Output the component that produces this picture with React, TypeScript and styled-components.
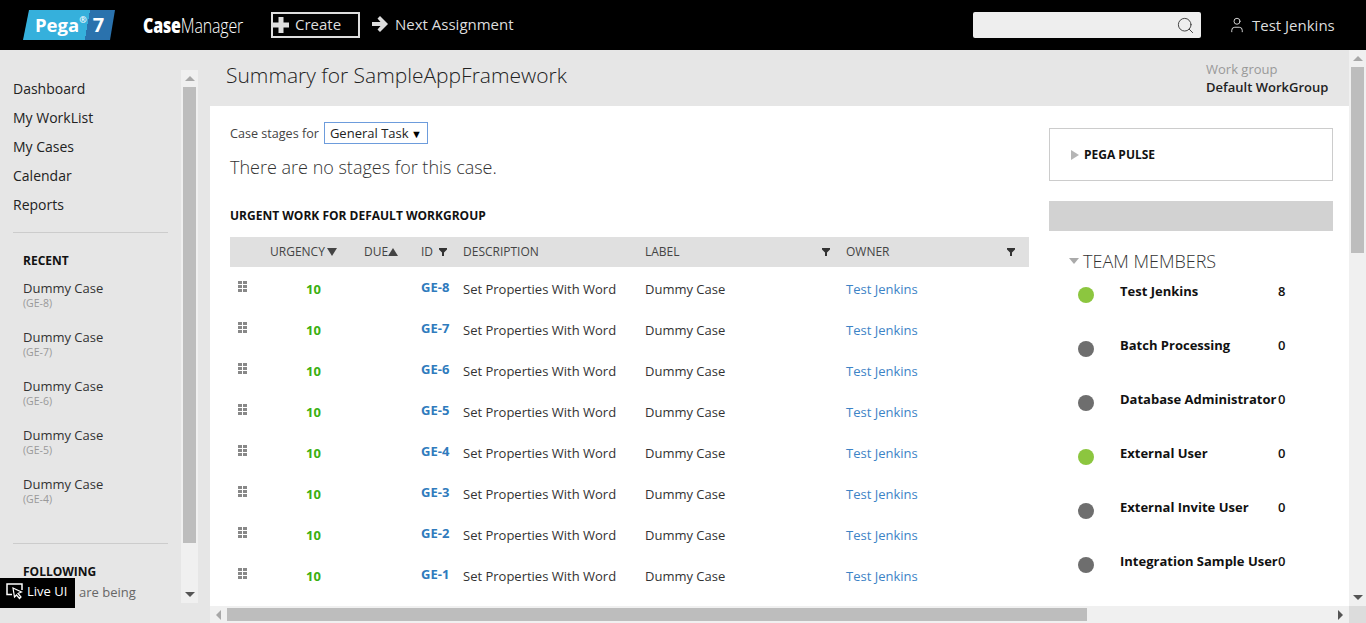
import styled, { createGlobalStyle } from 'styled-components';
import { Search, User } from 'lucide-react';

const GlobalStyle = createGlobalStyle`
  html, body {
    margin: 0;
    padding: 0;
    height: 100%;
    overflow: hidden;
    font-family: "Open Sans", "Noto Sans", sans-serif;
    color: #222;
  }
  * { box-sizing: border-box; }
`;

/* ── Header ── */

const Page = styled.div`
  position: relative;
  width: 1366px;
  height: 623px;
  overflow: hidden;
  display: flex;
  flex-direction: column;
  background: #e6e6e6;
`;

const Header = styled.header`
  flex: 0 0 50px;
  height: 50px;
  background: #000;
  display: flex;
  align-items: center;
  padding-left: 23px;
  color: #ddd;
`;

const Logo = styled.div`
  width: 92px;
  height: 30px;
  display: flex;
  align-items: center;
  color: #fff;
  font-weight: 700;
  background: linear-gradient(100deg, #35b0dc 0 66px, #2a72ad 66px 100%);
  clip-path: polygon(6px 0, 100% 0, 87px 100%, 0 100%);
`;

const LogoName = styled.span`
  margin-left: 12px;
  font-size: 18.5px;
  line-height: 28px;
`;

const LogoMark = styled.sup`
  font-size: 9px;
  line-height: 1;
  align-self: flex-start;
  margin-top: 5px;
`;

const LogoVersion = styled.span`
  margin-left: 6px;
  font-size: 20px;
  line-height: 30px;
`;

const Product = styled.div`
  margin-left: 28px;
  width: 100px;
  font-size: 21px;
  line-height: 30px;
  color: #fff;
  white-space: nowrap;
  letter-spacing: -0.2px;
  transform: scaleX(0.76);
  transform-origin: left center;

  b { font-weight: 800; }
  span { font-weight: 300; }
`;

const CreateButton = styled.div`
  margin-left: 28px;
  width: 89px;
  height: 26px;
  border: 2px solid #ddd;
  display: flex;
  align-items: center;
  gap: 6px;
  padding-bottom: 2px;
  font-size: 15px;
  color: #ddd;

  svg { flex: none; margin-top: 2px; }
`;

const NextLink = styled.div`
  margin-left: 12px;
  display: flex;
  align-items: center;
  gap: 7px;
  padding-bottom: 2px;
  font-size: 15px;
  color: #ddd;
`;

const HeaderRight = styled.div`
  margin-left: auto;
  display: flex;
  align-items: center;
`;

const SearchBox = styled.div`
  width: 228px;
  height: 26px;
  background: #eee;
  border-radius: 2px;
  display: flex;
  align-items: center;
  justify-content: flex-end;
  padding-right: 6px;
  color: #444;
`;

const UserLink = styled.div`
  width: 165px;
  padding: 0 0 1px 27px;
  display: flex;
  align-items: center;
  gap: 6px;
  font-size: 15px;
  color: #ddd;
`;

/* ── Shell ── */

const Body = styled.div`
  flex: 1;
  min-height: 0;
  display: flex;
`;

const Sidebar = styled.aside`
  flex: 0 0 210px;
  height: 573px;
  display: flex;
  padding: 20px 12px 20px 0;
`;

const SideContent = styled.div`
  flex: 0 0 181px;
  overflow: hidden;
  padding: 4px 13px 0;
`;

const NavItem = styled.div`
  height: 29px;
  line-height: 29px;
  font-size: 14px;
  color: #222;
`;

const SideRule = styled.hr<{ $top: number }>`
  margin: ${({ $top }) => $top}px 0 0;
  border: 0;
  border-top: 1px solid #ccc;
`;

const SideHeading = styled.div<{ $top: number }>`
  margin: ${({ $top }) => $top}px 0 0 10px;
  font-size: 12px;
  line-height: 16px;
  font-weight: 700;
  color: #111;
`;

const RecentItem = styled.div`
  margin-left: 10px;
  height: 49px;
  padding-top: 12px;
  font-size: 13px;
  line-height: 15px;
  color: #333;

  small {
    display: block;
    margin-top: 1px;
    font-size: 10.5px;
    line-height: 13px;
    color: #999;
  }
`;

const SideNote = styled.div`
  margin: 3px 0 0 66px;
  font-size: 13px;
  line-height: 18px;
  color: #666;
  white-space: nowrap;
`;

const VTrack = styled.div`
  flex: 0 0 17px;
  width: 17px;
  min-width: 0;
  display: flex;
  flex-direction: column;
  background: #f0f0f0;
`;

const VThumb = styled.div<{ $height: number }>`
  margin: 0 2px;
  height: ${({ $height }) => $height}px;
  background: #bdbdbd;
`;

const Spacer = styled.div`
  flex: 1;
`;

const ArrowBox = styled.div`
  flex: 0 0 17px;
  width: 17px;
  height: 17px;
  display: flex;
  align-items: center;
  justify-content: center;
`;

const Arrow = styled.span<{ $dir: 'up' | 'down' | 'left' | 'right'; $dark?: boolean }>`
  width: 0;
  height: 0;
  border-style: solid;
  border-color: transparent;
  ${({ $dir, $dark }) => {
    const c = $dark ? '#555' : '#a8a8a8';
    if ($dir === 'up') return `border-width: 0 5px 5px; border-bottom-color: ${c};`;
    if ($dir === 'down') return `border-width: 5px 5px 0; border-top-color: ${c};`;
    if ($dir === 'left') return `border-width: 5px 5px 5px 0; border-right-color: ${c};`;
    return `border-width: 5px 0 5px 5px; border-left-color: ${c};`;
  }}
`;

const SortArrow = styled.span<{ $up?: boolean }>`
  width: 0;
  height: 0;
  margin-left: ${({ $up }) => ($up ? '0' : '2px')};
  border-style: solid;
  border-color: transparent;
  border-width: ${({ $up }) => ($up ? '0 5.500px 8px' : '8px 5.500px 0')};
  ${({ $up }) => ($up ? 'border-bottom-color: #444;' : 'border-top-color: #444;')}
`;

const MainArea = styled.main`
  flex: 1;
  min-width: 0;
  display: grid;
  grid-template-columns: 1139px 17px;
  grid-template-rows: 556px 17px;
`;

const MainColumn = styled.div`
  min-height: 0;
  overflow: hidden;
  display: flex;
  flex-direction: column;
`;

const TitleBar = styled.div`
  flex: 0 0 56px;
  display: flex;
  justify-content: space-between;
  padding: 0 21px 0 16px;
`;

const PageTitle = styled.h1`
  margin: 11px 0 0;
  font-size: 21px;
  line-height: 28px;
  font-weight: 300;
  color: #222;
`;

const WorkGroup = styled.div`
  width: 122px;
  margin-top: 10px;
  font-size: 13px;
  line-height: 18px;
  color: #999;
  white-space: nowrap;

  strong {
    display: block;
    font-weight: 600;
    color: #222;
  }
`;

const Content = styled.div`
  flex: 1;
  min-height: 0;
  overflow: hidden;
  background: #fff;
  display: flex;
  gap: 20px;
  padding: 16px 16px 0 20px;
`;

const LeftColumn = styled.div`
  flex: 0 0 799px;
`;

const StageRow = styled.div`
  display: flex;
  align-items: center;
  gap: 5px;
  font-size: 12.600px;
  color: #444;
`;

const FakeSelect = styled.div`
  width: 104px;
  height: 22px;
  border: 1px solid #6d9cdc;
  display: flex;
  align-items: center;
  padding: 0 5px;
  font-size: 13px;
  color: #222;
  justify-content: space-between;

  span:last-child { font-size: 11px; color: #000; }
`;

const NoStages = styled.p`
  margin: 10px 0 0;
  font-size: 18px;
  line-height: 26px;
  font-weight: 300;
  color: #333;
`;

const TableTitle = styled.h2`
  margin: 26px 0 0;
  font-size: 12px;
  line-height: 20px;
  font-weight: 700;
  color: #111;
`;

const GRID = '40px 94px 57px 42px 182px 201px 183px';

const TableHead = styled.div`
  margin-top: 11px;
  height: 30px;
  padding-bottom: 1px;
  background: #e0e0e0;
  display: grid;
  grid-template-columns: ${GRID};
  align-items: center;
  font-size: 12px;
  color: #444;
`;

const HeadCell = styled.div<{ $pad?: number }>`
  display: flex;
  align-items: center;
  padding-right: ${({ $pad }) => $pad ?? 15}px;
`;

const FilterIcon = styled.span<{ $end?: boolean }>`
  display: inline-flex;
  margin-left: ${({ $end }) => ($end ? 'auto' : '6px')};
`;

const TableRow = styled.div`
  height: 41px;
  padding-top: 2px;
  display: grid;
  grid-template-columns: ${GRID};
  align-items: center;
  font-size: 13px;
  color: #333;
`;

const Handle = styled.div`
  width: 9px;
  height: 11px;
  margin: -4px 0 0 8px;
  display: grid;
  grid-template-columns: repeat(2, 4px);
  grid-auto-rows: 3px;
  gap: 1px;

  i { background: #888; display: block; }
`;

const Urgency = styled.div`
  padding-left: 36px;
  font-weight: 700;
  color: #3cb00f;
`;

const CaseId = styled.div`
  margin-top: -3px;
  font-weight: 700;
  color: #2f7bbd;
`;

const OwnerLink = styled.div`
  color: #3d83c6;
`;

const RightColumn = styled.div`
  flex: 0 0 284px;
  padding-top: 6px;
`;

const PulseBox = styled.div`
  height: 53px;
  border: 1px solid #ccc;
  display: flex;
  align-items: center;
  gap: 5px;
  padding-left: 21px;
  font-size: 12px;
  font-weight: 700;
  color: #111;
`;

const GreyBar = styled.div`
  margin-top: 20px;
  height: 30px;
  background: #d2d2d2;
`;

const TeamTitle = styled.div`
  margin: 17px 0 8px 20px;
  height: 26px;
  display: flex;
  align-items: center;
  gap: 4px;
  font-size: 18px;
  font-weight: 300;
  color: #333;
`;

const TriDown = styled.span`
  width: 0;
  height: 0;
  border-style: solid;
  border-width: 6px 5px 0;
  border-color: #aaa transparent transparent;
`;

const TriRight = styled.span`
  width: 0;
  height: 0;
  border-style: solid;
  border-width: 5px 0 5px 8px;
  border-color: transparent transparent transparent #b5b5b5;
`;

const Member = styled.div`
  height: 54px;
  margin-left: 30px;
  display: grid;
  grid-template-columns: 41px 158px auto;
  align-items: start;
  font-size: 13px;
  line-height: 18px;
  font-weight: 700;
  color: #111;
  white-space: nowrap;
`;

const MemberCount = styled.span`
  font-weight: 600;
`;

const StatusDot = styled.span<{ $online?: boolean }>`
  width: 16px;
  height: 16px;
  margin: 5px 0 0 -1px;
  border-radius: 50%;
  background: ${({ $online }) => ($online ? '#8cc63f' : '#6e6e6e')};
`;

const HTrack = styled.div`
  display: flex;
  align-items: center;
  background: #f0f0f0;
`;

const HThumb = styled.div`
  width: 860px;
  height: 13px;
  background: #bdbdbd;
`;

const Corner = styled.div`
  background: #dcdcdc;
`;

const LiveBadge = styled.div`
  position: absolute;
  left: 0;
  top: 578px;
  width: 75px;
  height: 30px;
  background: #000;
  color: #fff;
  display: flex;
  align-items: center;
  gap: 3px;
  padding: 0 0 4px 6px;
  font-size: 13px;
`;

/* ── Icons ── */

const PlusIcon = () => (
  <svg width="16" height="18" viewBox="0 0 16 18" fill="#ddd">
    <path d="M5.5 1h5v5.5H16v5h-5.5V17h-5v-5.500H0v-5h5.500z" />
  </svg>
);

const ArrowIcon = () => (
  <svg width="16" height="18" viewBox="0 0 16 18" fill="#ddd">
    <path d="M8 1l8 8-8 8-2.500-2.500L8.500 11H0V7h8.500L5.500 3.500z" />
  </svg>
);

const FunnelSvg = () => (
  <svg width="8" height="8" viewBox="0 0 8 8" fill="#333">
    <path d="M0 0h8v1.500L5 4.500V8H3V4.500L0 1.500z" />
  </svg>
);

const LiveIcon = () => (
  <svg width="18" height="18" viewBox="0 0 18 18" fill="none">
    <path d="M6 12.500H1V2h15v6" stroke="#fff" strokeWidth="1.500" />
    <path d="M7 6l8.500 4-3.500 1.500 3 3.500-1.500 1.500-3-3.500L8.500 15z" fill="#000" stroke="#fff" strokeWidth="1.200" />
  </svg>
);

/* ── Data ── */

const NAV = ['Dashboard', 'My WorkList', 'My Cases', 'Calendar', 'Reports'];
const RECENT = ['GE-8', 'GE-7', 'GE-6', 'GE-5', 'GE-4'];
const CASES = ['GE-8', 'GE-7', 'GE-6', 'GE-5', 'GE-4', 'GE-3', 'GE-2', 'GE-1'];
const MEMBERS = [
  { name: 'Test Jenkins', count: 8, online: true },
  { name: 'Batch Processing', count: 0, online: false },
  { name: 'Database Administrator', count: 0, online: false },
  { name: 'External User', count: 0, online: true },
  { name: 'External Invite User', count: 0, online: false },
  { name: 'Integration Sample User', count: 0, online: false },
];

/* ── Component ── */

export default function App() {
  return (
    <Page>
      <GlobalStyle />
      <Header>
        <Logo>
          <LogoName>Pega</LogoName>
          <LogoMark>®</LogoMark>
          <LogoVersion>7</LogoVersion>
        </Logo>
        <Product><b>Case</b><span>Manager</span></Product>
        <CreateButton><PlusIcon />Create</CreateButton>
        <NextLink><ArrowIcon />Next Assignment</NextLink>
        <HeaderRight>
          <SearchBox><Search size={19} strokeWidth={1.25} /></SearchBox>
          <UserLink><User size={18} strokeWidth={1.25} />Test Jenkins</UserLink>
        </HeaderRight>
      </Header>

      <Body>
        <Sidebar>
          <SideContent>
            {NAV.map((item) => <NavItem key={item}>{item}</NavItem>)}
            <SideRule $top={13} />
            <SideHeading $top={20}>RECENT</SideHeading>
            {RECENT.map((id) => (
              <RecentItem key={id}>
                Dummy Case
                <small>({id})</small>
              </RecentItem>
            ))}
            <SideRule $top={29} />
            <SideHeading $top={20}>FOLLOWING</SideHeading>
            <SideNote>are being</SideNote>
          </SideContent>
          <VTrack>
            <ArrowBox><Arrow $dir="up" /></ArrowBox>
            <VThumb $height={456} />
            <Spacer />
            <ArrowBox><Arrow $dir="down" $dark /></ArrowBox>
          </VTrack>
        </Sidebar>

        <MainArea>
          <MainColumn>
            <TitleBar>
              <PageTitle>Summary for SampleAppFramework</PageTitle>
              <WorkGroup>
                Work group
                <strong>Default WorkGroup</strong>
              </WorkGroup>
            </TitleBar>
            <Content>
              <LeftColumn>
                <StageRow>
                  Case stages for
                  <FakeSelect><span>General Task</span><span>▼</span></FakeSelect>
                </StageRow>
                <NoStages>There are no stages for this case.</NoStages>
                <TableTitle>URGENT WORK FOR DEFAULT WORKGROUP</TableTitle>
                <TableHead>
                  <HeadCell />
                  <HeadCell>URGENCY<SortArrow /></HeadCell>
                  <HeadCell>DUE<SortArrow $up /></HeadCell>
                  <HeadCell>ID<FilterIcon><FunnelSvg /></FilterIcon></HeadCell>
                  <HeadCell>DESCRIPTION</HeadCell>
                  <HeadCell $pad={16}>LABEL<FilterIcon $end><FunnelSvg /></FilterIcon></HeadCell>
                  <HeadCell $pad={14}>OWNER<FilterIcon $end><FunnelSvg /></FilterIcon></HeadCell>
                </TableHead>
                {CASES.map((id) => (
                  <TableRow key={id}>
                    <Handle>
                      {[0, 1, 2, 3, 4, 5].map((n) => <i key={n} />)}
                    </Handle>
                    <Urgency>10</Urgency>
                    <div />
                    <CaseId>{id}</CaseId>
                    <div>Set Properties With Word</div>
                    <div>Dummy Case</div>
                    <OwnerLink>Test Jenkins</OwnerLink>
                  </TableRow>
                ))}
              </LeftColumn>
              <RightColumn>
                <PulseBox><TriRight />PEGA PULSE</PulseBox>
                <GreyBar />
                <TeamTitle><TriDown />TEAM MEMBERS</TeamTitle>
                {MEMBERS.map((m) => (
                  <Member key={m.name}>
                    <StatusDot $online={m.online} />
                    <span>{m.name}</span>
                    <MemberCount>{m.count}</MemberCount>
                  </Member>
                ))}
              </RightColumn>
            </Content>
          </MainColumn>

          <VTrack>
            <ArrowBox><Arrow $dir="up" /></ArrowBox>
            <VThumb $height={186} />
            <Spacer />
            <ArrowBox><Arrow $dir="down" $dark /></ArrowBox>
          </VTrack>

          <HTrack>
            <ArrowBox><Arrow $dir="left" /></ArrowBox>
            <HThumb />
            <Spacer />
            <ArrowBox><Arrow $dir="right" $dark /></ArrowBox>
          </HTrack>
          <Corner />
        </MainArea>
      </Body>

      <LiveBadge><LiveIcon />Live UI</LiveBadge>
    </Page>
  );
}
